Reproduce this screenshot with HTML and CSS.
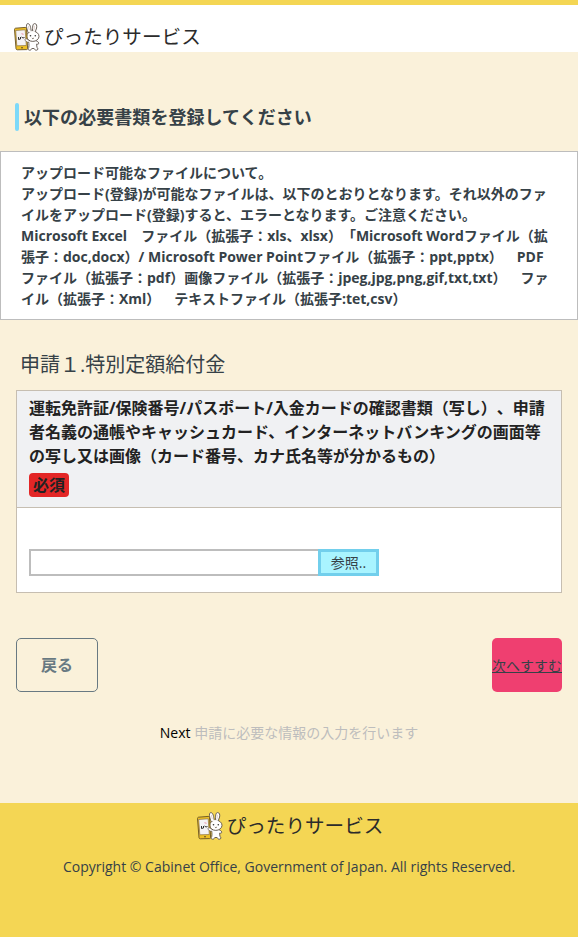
FILE: index.html
```
<!DOCTYPE html>
<html lang="ja">
<head>
    <meta charset="UTF-8">
    <meta name="viewport" content="width=device-width, initial-scale=1.0">
    <title>ぴったりサービス</title>
    <link rel="stylesheet" href="styles.css">
</head>
<body>
    <!-- Shared rabbit and phone icon -->
    <svg class="symbols" width="0" height="0">
        <symbol id="rabbit" viewBox="0 0 26 28">
            <!-- ears -->
            <path d="M14.300 10C12.500 6 11.500 .6 13.800 .6s3 4 3.500 8.400M18.600 9C18.400 4 18.600 .6 20.600 .6s2.400 2 2 4.400L21 9.500" fill="#fff" stroke="#5c5148" stroke-width=".9"/>
            <path d="M14.300 3l1 4M20.500 2.800l-.4 4" stroke="#d8bdb2" stroke-width=".7" fill="none"/>
            <!-- body -->
            <path d="M14.500 17.500h7c1.300.6 3 1.300 3.200 2.500.2 1.200-1 1.500-2 1-.1 1.400.1 2.700.4 3.500 1 .6 1.200 2.600-.6 2.700-1.500.1-2-.9-2.400-1.700h-2.300c-.4 1-1 1.800-2.300 1.700-1.600 0-1.700-1.600-.8-2.500.4-1.200.2-2.600.2-4z" fill="#fff" stroke="#5c5148" stroke-width=".9"/>
            <!-- head -->
            <ellipse cx="18.800" cy="13.300" rx="6.200" ry="5.100" fill="#fff" stroke="#5c5148" stroke-width=".9"/>
            <path d="M15 8.700h5.800" stroke="#fff" stroke-width="1.200"/>
            <circle cx="16.500" cy="12.800" r=".8" fill="#333"/>
            <circle cx="21.300" cy="12.800" r=".8" fill="#333"/>
            <path d="M17.900 15l1 .8 1-.8" fill="none" stroke="#665849" stroke-width=".8"/>
            <!-- phone -->
            <path d="M1.500 5.200l9.800-.8c.7 0 1.100.4 1.200 1l1.100 20c0 .7-.4 1.200-1 1.200l-9.300.2c-.7 0-1.200-.4-1.300-1.100L.5 6.500c0-.7.400-1.200 1-1.300z" fill="#eebf25" stroke="#665023" stroke-width=".9"/>
            <path d="M1.700 7.500l9.500-.7 1.100 15.700-9.500.3z" fill="#f5f3f5" stroke="#8b7342" stroke-width=".7"/>
            <path d="M4.500 14v2.500l2-.5v-2M7.500 14l1.500 1 1.500-.5" fill="none" stroke="#333"/>
            <path d="M7.500 10.500l2 1" stroke="#eba1b5" stroke-width="1.200"/>
            <circle cx="8" cy="24.700" r=".8" fill="#4a3b20"/>
            <!-- hand -->
            <path d="M14.800 19.500c-1.800-.3-3.800-1.500-3.800-3 .4-1.300 2-.7 3.800.8" fill="#fff" stroke="#665849" stroke-width=".7"/>
        </symbol>
    </svg>

    <header class="header">
        <div class="logo">
            <svg class="logo-icon"><use href="#rabbit"/></svg>
            <span>ぴったりサービス</span>
        </div>
    </header>

    <main>
        <h1 class="page-title">以下の必要書類を登録してください</h1>

        <div class="notice">
            アップロード可能なファイルについて。<br>
            アップロード(登録)が可能なファイルは、以下のとおりとなります。それ以外のファ<br>
            イルをアップロード(登録)すると、エラーとなります。ご注意ください。<br>
            Microsoft Excel　ファイル（拡張子：xls、xlsx）「Microsoft Wordファイル（拡<br>
            張子：doc,docx）/ Microsoft Power Pointファイル（拡張子：ppt,pptx）　PDF<br>
            ファイル（拡張子：pdf）画像ファイル（拡張子：jpeg,jpg,png,gif,txt,txt）　ファ<br>
            イル（拡張子：Xml）　テキストファイル（拡張子:tet,csv）
        </div>

        <h2 class="section-title">申請１.特別定額給付金</h2>

        <div class="upload-box">
            <div class="upload-header">
                運転免許証/保険番号/パスポート/入金カードの確認書類（写し）、申請<br>
                者名義の通帳やキャッシュカード、インターネットバンキングの画面等<br>
                の写し又は画像（カード番号、カナ氏名等が分かるもの）
                <div class="badge">必須</div>
            </div>
            <div class="upload-body">
                <input class="file-name" type="text">
                <button class="browse" type="button">参照..</button>
            </div>
        </div>

        <div class="buttons">
            <button class="back" type="button">戻る</button>
            <a class="next" href="#">次へすすむ</a>
        </div>

        <p class="next-step">Next <span>申請に必要な情報の入力を行います</span></p>
    </main>

    <footer class="footer">
        <div class="logo">
            <svg class="logo-icon"><use href="#rabbit"/></svg>
            <span>ぴったりサービス</span>
        </div>
        <p class="copyright">Copyright © Cabinet Office, Government of Japan. All rights Reserved.</p>
    </footer>
</body>
</html>
```
FILE: styles.css
```
* {
    box-sizing: border-box;
}

body {
    margin: 0;
    background: #faf1da;
    color: #364147;
    font-family: "Open Sans", "Noto Sans CJK JP", sans-serif;
    font-size: 14px;
    line-height: 21px;
    text-spacing-trim: space-all;
}

.symbols {
    display: block;
}

.header {
    height: 52px;
    padding: 18px 14px 0;
    border-top: 5px solid #f4d654;
    background: #fff;
}

.logo {
    display: flex;
    gap: 4px;
    height: 28px;
    color: #2b2b2b;
    font-size: 19.6px;
    line-height: 28px;
    white-space: nowrap;
}

.logo-icon {
    width: 26px;
    height: 28px;
}

.page-title {
    display: flex;
    align-items: center;
    height: 28px;
    margin: 51px 0 20px 15px;
    font-size: 18px;
    letter-spacing: 0.06px;
    line-height: 28px;
}

.page-title::before {
    content: "";
    width: 4px;
    height: 28px;
    margin-right: 5px;
    border-radius: 2px;
    background: #7cd9f9;
}

.notice {
    height: 169px;
    padding: 10px 0 0 20px;
    border: 1px solid #bdbdbd;
    background: #fff;
    font-weight: bold;
    white-space: nowrap;
}

.section-title {
    height: 30px;
    margin: 30px 0 10px 20px;
    font-size: 20px;
    font-weight: normal;
    line-height: 30px;
}

.upload-box {
    height: 203px;
    margin: 0 16px;
    border: 1px solid #c6beb1;
    background: #fff;
}

.upload-header {
    height: 117px;
    padding: 5px 12px 0;
    border-bottom: 1px solid #c6beb1;
    background: #f0f1f3;
    color: #222;
    font-size: 16px;
    font-weight: bold;
    line-height: 24px;
    white-space: nowrap;
}

.badge {
    width: 40px;
    height: 24px;
    margin-top: 5px;
    border-radius: 4px;
    background: #e32626;
    text-align: center;
}

.upload-body {
    display: flex;
    padding: 41px 12px 0;
}

.file-name {
    width: 289px;
    height: 27px;
    border: 2px solid #bdbdbd;
    border-right: 0;
    background: #fff;
}

.browse {
    width: 61px;
    height: 27px;
    padding: 0;
    border: 3px solid #72cfec;
    background: #a9f4ff;
    color: #364147;
    font: inherit;
}

.buttons {
    display: flex;
    justify-content: space-between;
    margin: 45px 16px 0;
}

.back {
    width: 82px;
    height: 54px;
    padding: 0 0 2px;
    border: 1px solid #687982;
    border-radius: 5px;
    background: none;
    color: #687982;
    font: bold 16px "Open Sans", "Noto Sans CJK JP", sans-serif;
}

.next {
    width: 70px;
    height: 54px;
    border-radius: 5px;
    background: #ef3f70;
    color: #364147;
    line-height: 56px;
    white-space: nowrap;
}

.next-step {
    margin: 30px 0 60px;
    color: #000;
    text-align: center;
}

.next-step span {
    color: #bdbdbd;
}

.footer {
    height: 134px;
    padding-top: 9px;
    background: #f4d654;
}

.footer .logo {
    justify-content: center;
    padding-left: 2px;
}

.copyright {
    margin: 16px 0 0;
    text-align: center;
}
```
